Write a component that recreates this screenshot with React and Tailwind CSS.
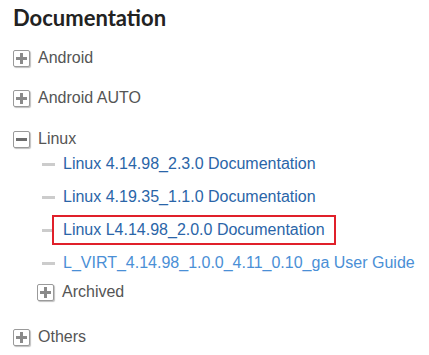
import React from 'react';

const PlusBox = () => (
  <span className="relative flex h-[17px] w-[17px] shrink-0 items-center justify-center rounded-[2px] border border-[#9a9a9a] bg-white shadow-[1px_1px_1px_rgba(0,0,0,0.25)]">
    <span className="absolute h-[3px] w-[11px] bg-[#8a8a8a]" />
    <span className="absolute h-[11px] w-[3px] bg-[#8a8a8a]" />
  </span>
);

const MinusBox = () => (
  <span className="relative flex h-[17px] w-[17px] shrink-0 items-center justify-center rounded-[2px] border border-[#9a9a9a] bg-white shadow-[1px_1px_1px_rgba(0,0,0,0.25)]">
    <span className="h-[3px] w-[11px] bg-[#6e6e6e]" />
  </span>
);

const Folder = ({ label, open, className = '' }) => (
  <div className={`flex h-[24px] items-center gap-[8px] ${className}`}>
    {open ? <MinusBox /> : <PlusBox />}
    <span className="text-[16px] text-[#555555]">{label}</span>
  </div>
);

const docs = [
  { name: 'Linux 4.14.98_2.3.0 Documentation', color: 'text-[#2a65a8]' },
  { name: 'Linux 4.19.35_1.1.0 Documentation', color: 'text-[#2a65a8]' },
  { name: 'Linux L4.14.98_2.0.0 Documentation', color: 'text-[#2a65a8]', selected: true },
  { name: 'L_VIRT_4.14.98_1.0.0_4.11_0.10_ga User Guide', color: 'text-[#4a8fd6]' },
];

const App = () => {
  return (
    <div className="h-[355px] w-[429px] overflow-hidden bg-white px-[13px] font-['Liberation_Sans',Arial,sans-serif]">
      <h2 className="mt-[4px] font-['Lato',sans-serif] text-[22px] font-bold leading-[28px] text-[#222222]">
        Documentation
      </h2>
      <ul className="mt-[14px]">
        <li>
          <Folder label="Android" />
        </li>
        <li className="mt-[16px]">
          <Folder label="Android AUTO" />
        </li>
        <li className="mt-[17px]">
          <Folder label="Linux" open className="h-[22px]" />
          <ul className="-mt-[2px] flex flex-col gap-[3px] pl-[29px]">
            {docs.map((doc) => (
              <li key={doc.name} className="flex h-[30px] items-center">
                <span className="h-[3px] w-[13px] shrink-0 bg-[#cccccc]" />
                {doc.selected ? (
                  <a
                    href="#"
                    className={`relative -ml-[3px] flex h-[30px] items-center border-2 border-[#e0202a] bg-white pl-[9px] pr-[9px] text-[16px] ${doc.color}`}
                  >
                    {doc.name}
                  </a>
                ) : (
                  <a href="#" className={`ml-[8px] text-[16px] ${doc.color}`}>
                    {doc.name}
                  </a>
                )}
              </li>
            ))}
            <li className="-mt-[1px]">
              <Folder label="Archived" className="-ml-[5px]" />
            </li>
          </ul>
        </li>
        <li className="mt-[21px]">
          <Folder label="Others" />
        </li>
      </ul>
    </div>
  );
};

export default App;
